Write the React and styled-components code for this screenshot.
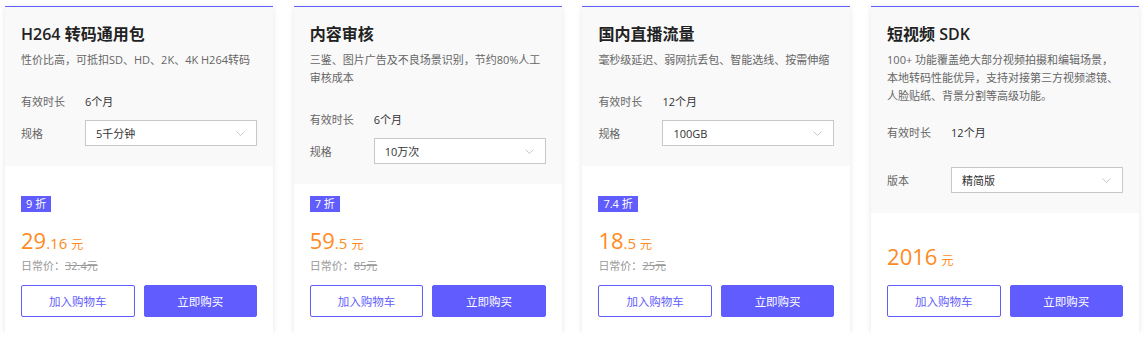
import React from 'react';
import styled, { createGlobalStyle } from 'styled-components';

const GlobalStyle = createGlobalStyle`
  * { box-sizing: border-box; }
  body {
    margin: 0;
    background: #fff;
    font-family: "Open Sans", "Noto Sans CJK SC", sans-serif;
    color: #333;
  }
`;

const cards = [
  {
    title: 'H264 转码通用包',
    desc: '性价比高，可抵扣SD、HD、2K、4K H264转码',
    duration: '6个月',
    specLabel: '规格',
    spec: '5千分钟',
    discount: '9 折',
    price: '29',
    decimals: '.16',
    original: '32.4元',
  },
  {
    title: '内容审核',
    desc: '三鉴、图片广告及不良场景识别，节约80%人工审核成本',
    duration: '6个月',
    specLabel: '规格',
    spec: '10万次',
    discount: '7 折',
    price: '59',
    decimals: '.5',
    original: '85元',
  },
  {
    title: '国内直播流量',
    desc: '毫秒级延迟、弱网抗丢包、智能选线、按需伸缩',
    duration: '12个月',
    specLabel: '规格',
    spec: '100GB',
    discount: '7.4 折',
    price: '18',
    decimals: '.5',
    original: '25元',
  },
  {
    title: '短视频 SDK',
    desc: '100+ 功能覆盖绝大部分视频拍摄和编辑场景，本地转码性能优异，支持对接第三方视频滤镜、人脸贴纸、背景分割等高级功能。',
    duration: '12个月',
    specLabel: '版本',
    spec: '精简版',
    price: '2016',
    wide: true,
  },
];

const Chevron = () => (
  <svg width="9" height="5" viewBox="0 0 9 5">
    <polyline points="0.5,0.5 4.5,4.5 8.5,0.5" fill="none" stroke="#c8c8c8" strokeWidth="1" />
  </svg>
);

const ProductCard = ({ item }) => (
  <Card>
    <Top>
      <Title>{item.title}</Title>
      <Desc>{item.desc}</Desc>
      <Row $mt={item.wide ? 14 : 19}>
        <Label>有效时长</Label>
        <Value>{item.duration}</Value>
      </Row>
      <Row $mt={item.wide ? 22 : 6}>
        <Label>{item.specLabel}</Label>
        <Select>
          <span>{item.spec}</span>
          <Chevron />
        </Select>
      </Row>
    </Top>
    <Bottom>
      {item.discount && <Badge>{item.discount}</Badge>}
      <Price $mb={item.original ? 4 : 15}>
        <Int>{item.price}</Int>
        {item.decimals && <Dec>{item.decimals}</Dec>}
        <Unit>元</Unit>
      </Price>
      {item.original && (
        <Original>
          日常价：<s>{item.original}</s>
        </Original>
      )}
      <Buttons>
        <Button>加入购物车</Button>
        <Button $primary>立即购买</Button>
      </Buttons>
    </Bottom>
  </Card>
);

export default function App() {
  return (
    <>
      <GlobalStyle />
      <Grid>
        {cards.map((c) => (
          <ProductCard key={c.title} item={c} />
        ))}
      </Grid>
    </>
  );
}

const Grid = styled.div`
  display: grid;
  grid-template-columns: repeat(4, 268px);
  column-gap: 20.7px;
  padding: 6px 0 0 5px;
`;

const Card = styled.div`
  height: 327px;
  display: flex;
  flex-direction: column;
  background: #fff;
  border-top: 1px solid #615cfd;
  box-shadow: 0 1px 6px rgba(0, 0, 0, 0.1);
`;

const Top = styled.div`
  background: #f9f9f9;
  padding: 16px 16px 20px;
`;

const Title = styled.div`
  font-size: 16px;
  line-height: 22px;
  font-weight: 600;
  color: #222;
`;

const Desc = styled.div`
  margin-top: 6px;
  font-size: 11px;
  line-height: 18px;
  color: #666;
`;

const Row = styled.div`
  display: flex;
  align-items: center;
  height: 26px;
  margin-top: ${(p) => p.$mt}px;
`;

const Label = styled.div`
  width: 64px;
  flex-shrink: 0;
  font-size: 11px;
  color: #666;
`;

const Value = styled.div`
  font-size: 11px;
  color: #333;
`;

const Select = styled.div`
  flex: 1;
  height: 26px;
  display: flex;
  align-items: center;
  justify-content: space-between;
  padding: 0 11px 0 10px;
  background: #fff;
  border: 1px solid #c8c8c8;
  font-size: 11px;
  color: #333;
`;

const Bottom = styled.div`
  flex: 1;
  display: flex;
  flex-direction: column;
  justify-content: flex-end;
  padding: 0 16px 16px;
`;

const Badge = styled.div`
  align-self: flex-start;
  height: 16px;
  line-height: 16px;
  padding: 0 5px;
  font-size: 11px;
  color: #fff;
  background: #615cfd;
  margin-bottom: 14px;
`;

const Price = styled.div`
  display: flex;
  align-items: baseline;
  height: 28px;
  color: #ff8a1e;
  margin-bottom: ${(p) => p.$mb}px;
`;

const Int = styled.span`
  font-size: 22px;
  line-height: 28px;
  font-weight: 500;
`;

const Dec = styled.span`
  font-size: 15px;
  font-weight: 500;
`;

const Unit = styled.span`
  font-size: 12px;
  margin-left: 4px;
`;

const Original = styled.div`
  font-size: 11px;
  line-height: 16px;
  color: #999;
  margin-bottom: 11px;

  s {
    text-decoration: line-through;
  }
`;

const Buttons = styled.div`
  display: grid;
  grid-template-columns: 1fr 1fr;
  column-gap: 9px;
`;

const Button = styled.button`
  height: 32px;
  border-radius: 2px;
  font-family: inherit;
  font-size: 11.5px;
  cursor: pointer;
  border: 1px solid #615cfd;
  background: ${(p) => (p.$primary ? '#615cfd' : '#fff')};
  color: ${(p) => (p.$primary ? '#fff' : '#615cfd')};
`;
